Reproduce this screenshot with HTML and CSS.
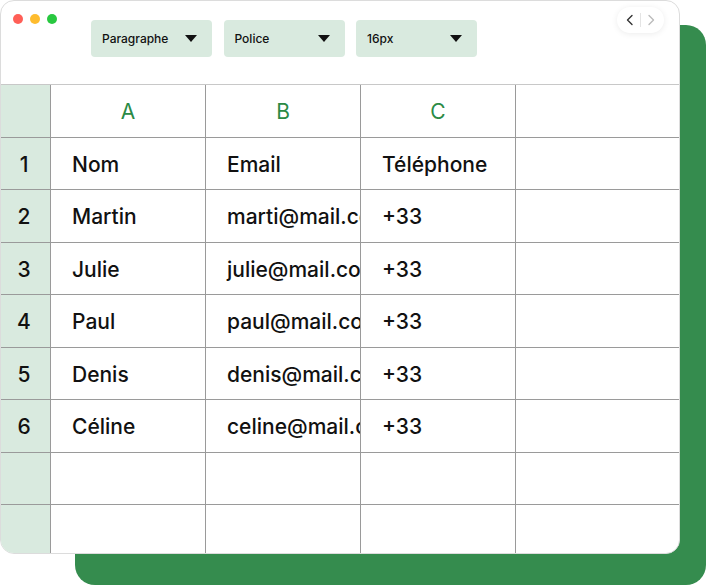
FILE: index.html
```html
<!DOCTYPE html>
<html lang="fr">
<head>
  <meta charset="UTF-8">
  <meta name="viewport" content="width=device-width, initial-scale=1.0">
  <title>Tableur</title>
  <link rel="stylesheet" href="styles.css">
</head>
<body>
  <div class="stage">
    <div class="backdrop"></div>

    <div class="fenetre">
      <div class="barre">
        <div class="feux">
          <span class="feu rouge"></span>
          <span class="feu jaune"></span>
          <span class="feu vert"></span>
        </div>

        <div class="menus">
          <div class="menu"><span>Paragraphe</span><span class="fleche"></span></div>
          <div class="menu"><span>Police</span><span class="fleche"></span></div>
          <div class="menu"><span>16px</span><span class="fleche"></span></div>
        </div>

        <div class="nav">
          <svg width="10" height="12" viewBox="0 0 10 12"><path d="M7 1.5 L2.5 6 L7 10.5" fill="none" stroke="#333" stroke-width="1.4" stroke-linecap="round" stroke-linejoin="round"/></svg>
          <span class="nav-sep"></span>
          <svg width="10" height="12" viewBox="0 0 10 12"><path d="M3 1.5 L7.5 6 L3 10.5" fill="none" stroke="#bbb" stroke-width="1.4" stroke-linecap="round" stroke-linejoin="round"/></svg>
        </div>
      </div>

      <div class="grille">
        <div class="num"></div>
        <div class="col">A</div>
        <div class="col">B</div>
        <div class="col">C</div>
        <div class="col vide"></div>

        <div class="num">1</div>
        <div class="cell">Nom</div>
        <div class="cell">Email</div>
        <div class="cell">Téléphone</div>
        <div class="cell vide"></div>

        <div class="num">2</div>
        <div class="cell">Martin</div>
        <div class="cell">marti@mail.com</div>
        <div class="cell">+33</div>
        <div class="cell vide"></div>

        <div class="num">3</div>
        <div class="cell">Julie</div>
        <div class="cell">julie@mail.com</div>
        <div class="cell">+33</div>
        <div class="cell vide"></div>

        <div class="num">4</div>
        <div class="cell">Paul</div>
        <div class="cell">paul@mail.com</div>
        <div class="cell">+33</div>
        <div class="cell vide"></div>

        <div class="num">5</div>
        <div class="cell">Denis</div>
        <div class="cell">denis@mail.com</div>
        <div class="cell">+33</div>
        <div class="cell vide"></div>

        <div class="num">6</div>
        <div class="cell">Céline</div>
        <div class="cell">celine@mail.com</div>
        <div class="cell">+33</div>
        <div class="cell vide"></div>

        <div class="num"></div>
        <div class="cell"></div>
        <div class="cell"></div>
        <div class="cell"></div>
        <div class="cell vide"></div>

        <div class="num"></div>
        <div class="cell"></div>
        <div class="cell"></div>
        <div class="cell"></div>
        <div class="cell vide"></div>
      </div>
    </div>
  </div>
</body>
</html>
```

FILE: styles.css
```css
body {
  margin: 0;
  background-color: #fff;
  font-family: Inter, "Noto Sans", sans-serif;
  color: #111;
}
.stage {
  display: grid;
  width: 706px;
  height: 585px;
  overflow: hidden;
}
.backdrop {
  grid-area: 1 / 1;
  margin: 25px 0 0 75px;
  width: 631px;
  height: 560px;
  background-color: #358c4e;
  border-radius: 20px;
}
.fenetre {
  grid-area: 1 / 1;
  width: 680px;
  height: 554px;
  box-sizing: border-box;
  background-color: #fff;
  border: 1px solid #dcdcdc;
  border-radius: 14px;
  overflow: hidden;
  display: flex;
  flex-direction: column;
}
.barre {
  display: flex;
  align-items: flex-start;
  height: 83px;
  flex-shrink: 0;
  padding: 0 15px 0 12px;
}
.feux {
  display: flex;
  gap: 7px;
  margin-top: 13px;
}
.feu {
  width: 10px;
  height: 10px;
  border-radius: 50%;
}
.rouge { background-color: #ff5f57; }
.jaune { background-color: #febc2e; }
.vert { background-color: #28c840; }
.menus {
  display: flex;
  gap: 11.5px;
  margin: 19px 0 0 34px;
}
.menu {
  width: 121px;
  height: 37px;
  box-sizing: border-box;
  padding: 0 15px 0 11px;
  background-color: #d9eadf;
  border-radius: 4px;
  display: flex;
  align-items: center;
  justify-content: space-between;
  font-size: 12px;
  font-weight: 500;
  color: #111;
}
.fleche {
  width: 0;
  height: 0;
  border-left: 6px solid transparent;
  border-right: 6px solid transparent;
  border-top: 7px solid #111;
}
.nav {
  margin: 6px 0 0 auto;
  width: 47px;
  height: 26px;
  border-radius: 13px;
  background-color: #fff;
  box-shadow: 0 1px 6px rgba(0, 0, 0, 0.08);
  display: flex;
  align-items: center;
  justify-content: center;
  gap: 5px;
}
.nav-sep {
  width: 1px;
  height: 14px;
  background-color: #e4e4e4;
}
.grille {
  display: grid;
  grid-template-columns: 50px 155px 155px 155px 1fr;
  grid-auto-rows: 52.5px;
  border-top: 1px solid #c8c8c8;
}
.grille > div {
  box-sizing: border-box;
  border-right: 1px solid #9a9a9a;
  border-bottom: 1px solid #9a9a9a;
  display: flex;
  align-items: center;
  overflow: hidden;
  white-space: nowrap;
  font-size: 21px;
  font-weight: 500;
  padding-top: 2px;
}
.grille > .vide {
  border-right: none;
}
.num {
  background-color: #d9eadf;
  justify-content: center;
  padding-right: 3px;
  color: #111;
}
.grille > .col {
  justify-content: center;
  font-weight: 400;
  color: #2a8a45;
}
.cell {
  padding-left: 21px;
  color: #111;
}
```
